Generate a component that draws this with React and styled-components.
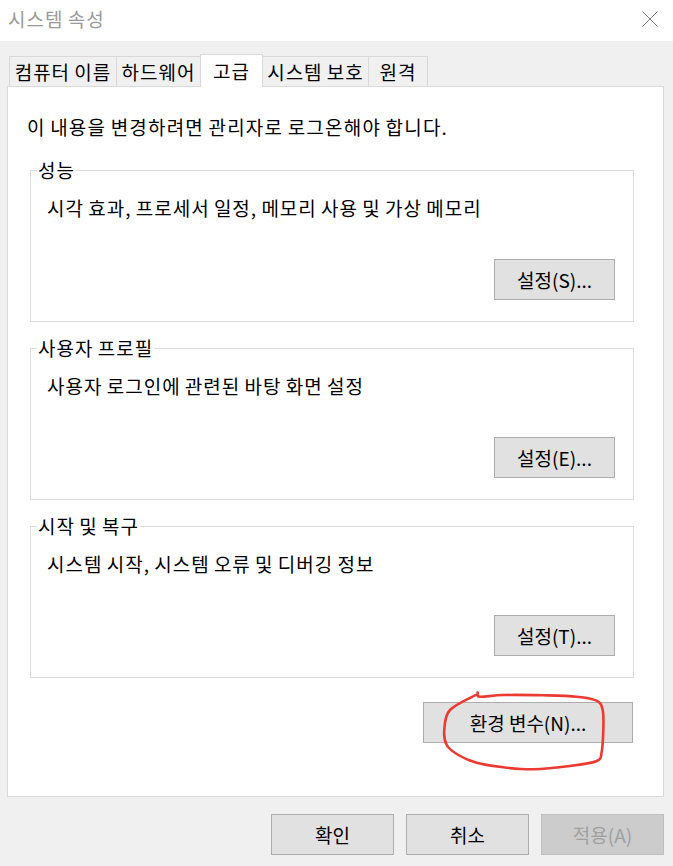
import React from 'react';
import styled, { createGlobalStyle } from 'styled-components';

const GlobalStyle = createGlobalStyle`
  html, body {
    margin: 0;
    padding: 0;
    background: #f0f0f0;
  }
  body {
    font-family: "Noto Sans CJK KR", "Noto Sans", sans-serif;
    color: #000;
    letter-spacing: 1px;
    word-spacing: -1px;
  }
`;

const Window = styled.div`
  position: relative;
  width: 673px;
  height: 866px;
  display: flex;
  flex-direction: column;
  background: #f0f0f0;
  overflow: hidden;
`;

const TitleBar = styled.div`
  height: 41px;
  flex: 0 0 41px;
  background: #fff;
  display: flex;
  align-items: center;
  justify-content: space-between;
  padding: 0 15px 0 8px;
  box-sizing: border-box;
`;

const Title = styled.div`
  font-size: 19px;
  line-height: 24px;
  color: #9a9a9a;
  margin-top: -3px;
`;

const CloseIcon = styled.svg`
  width: 16px;
  height: 16px;
  margin-top: -4px;
`;

const Body = styled.div`
  flex: 1;
  display: flex;
  flex-direction: column;
  padding: 13px 9px 0 7px;
`;

const TabRow = styled.div`
  display: flex;
  align-items: flex-end;
  padding-left: 2px;
  position: relative;
  z-index: 1;
`;

const Tab = styled.div`
  box-sizing: border-box;
  width: ${p => p.$width}px;
  height: ${p => (p.$active ? 33 : 30)}px;
  margin-bottom: ${p => (p.$active ? -1 : 0)}px;
  margin-left: -1px;
  &:first-child { margin-left: 0; }
  border: 1px solid #d9d9d9;
  border-bottom: none;
  background: ${p => (p.$active ? '#fff' : '#f0f0f0')};
  position: relative;
  z-index: ${p => (p.$active ? 2 : 1)};
  display: flex;
  align-items: center;
  justify-content: center;
  font-size: 19px;
  white-space: nowrap;
  padding-bottom: ${p => (p.$active ? 2 : 0)}px;
`;

const Panel = styled.div`
  box-sizing: border-box;
  height: 711px;
  border: 1px solid #d9d9d9;
  background: #fff;
  padding: 28px 29px 0 19px;
  display: flex;
  flex-direction: column;
`;

const Intro = styled.div`
  font-size: 19px;
  line-height: 24px;
  white-space: nowrap;
  letter-spacing: 1.2px;
`;

const Group = styled.fieldset`
  margin: ${p => (p.$first ? 19 : 14)}px 0 0 3px;
  border: 1px solid #dcdcdc;
  padding: 14px 18px 21px 16px;
  min-width: 0;
  display: flex;
  flex-direction: column;
`;

const Legend = styled.legend`
  margin-left: -10px;
  padding: 0 1px;
  font-size: 19px;
  line-height: 24px;
`;

const Desc = styled.div`
  font-size: 19px;
  line-height: 24px;
  white-space: nowrap;
`;

const Button = styled.button`
  box-sizing: border-box;
  width: ${p => p.$width}px;
  height: 41px;
  padding: 0;
  border: 1px solid ${p => (p.disabled ? '#bfbfbf' : '#adadad')};
  background: ${p => (p.disabled ? '#cccccc' : '#e1e1e1')};
  color: ${p => (p.disabled ? '#a0a0a0' : '#000')};
  font-family: inherit;
  font-size: 19px;
  line-height: 24px;
  letter-spacing: 0;
  white-space: nowrap;
`;

const GroupButton = styled(Button)`
  align-self: flex-end;
  margin-top: 39px;
`;

const EnvButton = styled(Button)`
  align-self: flex-end;
  margin: 24px 1px 0 0;
`;

const Footer = styled.div`
  display: flex;
  justify-content: flex-end;
  gap: 12px;
  margin-top: 17px;
`;

const Annotation = styled.svg`
  position: absolute;
  left: 0;
  top: 0;
  width: 673px;
  height: 866px;
  pointer-events: none;
`;

const tabs = [
  { label: '컴퓨터 이름', width: 108 },
  { label: '하드웨어', width: 85 },
  { label: '고급', width: 63, active: true },
  { label: '시스템 보호', width: 107 },
  { label: '원격', width: 60 },
];

const groups = [
  { title: '성능', desc: '시각 효과, 프로세서 일정, 메모리 사용 및 가상 메모리', button: '설정(S)...' },
  { title: '사용자 프로필', desc: '사용자 로그인에 관련된 바탕 화면 설정', button: '설정(E)...' },
  { title: '시작 및 복구', desc: '시스템 시작, 시스템 오류 및 디버깅 정보', button: '설정(T)...' },
];

// hand drawn circle around the env button
const circlePts = [
  [477.7, 694], [450, 710], [444.3, 730], [446.7, 745], [458.3, 755], [476.7, 762.7],
  [503.3, 767.3], [533.3, 769.3], [570, 766], [596.7, 761], [601.7, 751.7], [603.3, 730],
  [602.7, 710], [596.7, 700.7], [576.7, 696.7], [543.3, 695.3], [503.3, 695], [480, 696.7],
  [477.7, 692.5],
];

const smoothPath = pts => {
  let d = `M${pts[0][0]},${pts[0][1]}`;
  for (let i = 0; i < pts.length - 1; i++) {
    const p0 = pts[i - 1] || pts[i];
    const p1 = pts[i];
    const p2 = pts[i + 1];
    const p3 = pts[i + 2] || p2;
    const c1 = [p1[0] + (p2[0] - p0[0]) / 6, p1[1] + (p2[1] - p0[1]) / 6];
    const c2 = [p2[0] - (p3[0] - p1[0]) / 6, p2[1] - (p3[1] - p1[1]) / 6];
    d += ` C${c1[0].toFixed(1)},${c1[1].toFixed(1)} ${c2[0].toFixed(1)},${c2[1].toFixed(1)} ${p2[0]},${p2[1]}`;
  }
  return d;
};

export default function App() {
  return (
    <>
      <GlobalStyle />
      <Window>
        <TitleBar>
          <Title>시스템 속성</Title>
          <CloseIcon viewBox="0 0 16 16">
            <path d="M0.5 0.5 L15.5 15.5 M15.5 0.5 L0.5 15.5" stroke="#7a7a7a" strokeWidth="1" fill="none" />
          </CloseIcon>
        </TitleBar>
        <Body>
          <TabRow>
            {tabs.map(t => (
              <Tab key={t.label} $width={t.width} $active={t.active}>{t.label}</Tab>
            ))}
          </TabRow>
          <Panel>
            <Intro>이 내용을 변경하려면 관리자로 로그온해야 합니다.</Intro>
            {groups.map((g, i) => (
              <Group key={g.title} $first={i === 0}>
                <Legend>{g.title}</Legend>
                <Desc>{g.desc}</Desc>
                <GroupButton $width={121}>{g.button}</GroupButton>
              </Group>
            ))}
            <EnvButton $width={210}>환경 변수(N)...</EnvButton>
          </Panel>
          <Footer>
            <Button $width={123}>확인</Button>
            <Button $width={123}>취소</Button>
            <Button $width={123} disabled>적용(A)</Button>
          </Footer>
        </Body>
        <Annotation viewBox="0 0 673 866">
          <path d={smoothPath(circlePts)} stroke="#ec3a32" strokeWidth="2.6" fill="none" strokeLinecap="round" strokeLinejoin="round" />
        </Annotation>
      </Window>
    </>
  );
}
